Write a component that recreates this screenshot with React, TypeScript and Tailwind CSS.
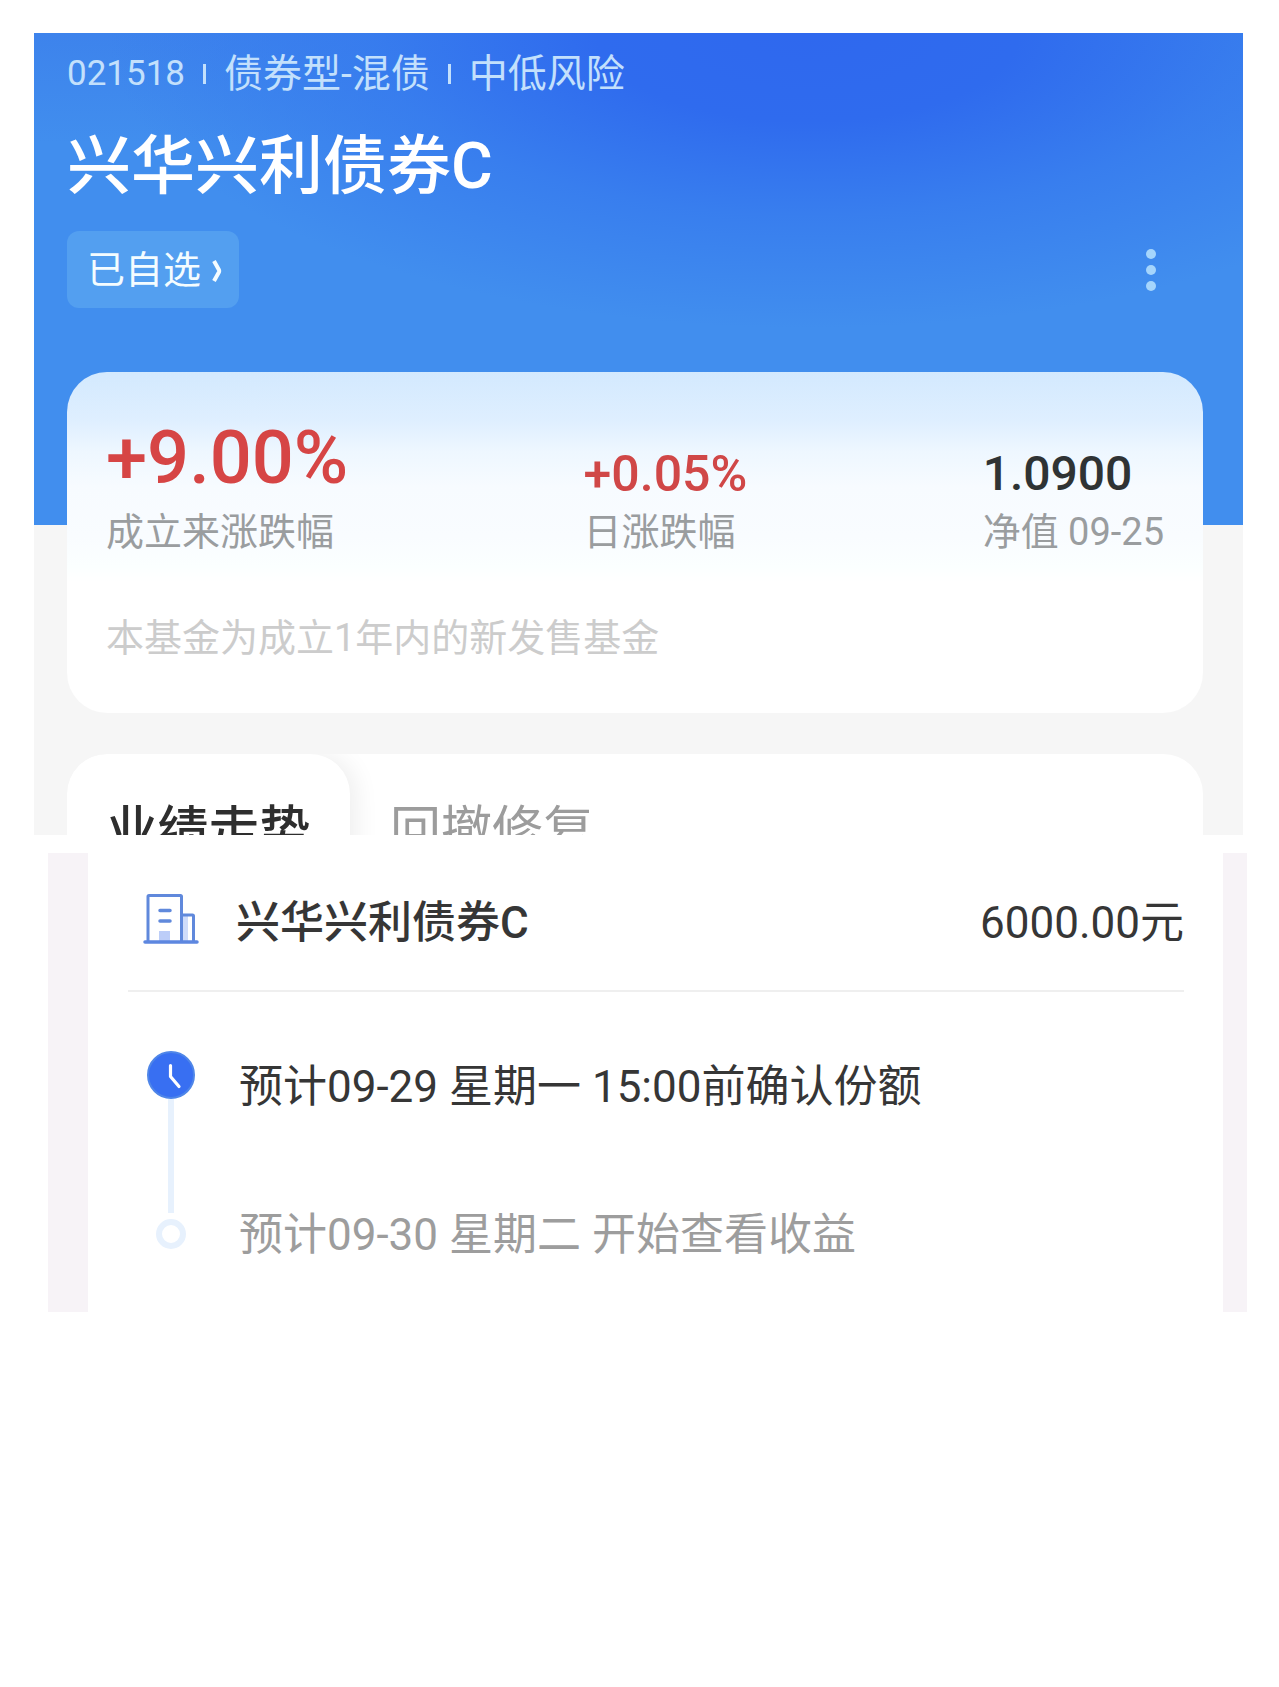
import React from "react";

const stats = [
  { value: "+9.00%", label: "成立来涨跌幅", tone: "text-[#d64545] text-[74px] leading-[80px] mb-2" },
  { value: "+0.05%", label: "日涨跌幅", tone: "text-[#d04747] text-[50px] leading-[56px] mb-1" },
  { value: "1.0900", label: "净值 09-25", tone: "text-[#2f3334] text-[48px] leading-[56px] mb-1" },
];

function BuildingIcon() {
  return (
    <svg className="mb-1" width="56" height="52" viewBox="0 0 56 52" fill="none" aria-hidden="true">
      <rect x="40" y="22" width="5" height="25" fill="#cfdcfa" />
      <rect x="16" y="37" width="11" height="11" fill="#bccdf8" />
      <path d="M5 48V2.500a1 1 0 0 1 1-1H37.500a1 1 0 0 1 1 1V48" stroke="#6089dc" strokeWidth="3" />
      <path d="M38.500 21H49.500a1 1 0 0 1 1 1V48" stroke="#6089dc" strokeWidth="3" />
      <path d="M17 16.500H27M17 27H27" stroke="#6089dc" strokeWidth="3.500" strokeLinecap="round" />
      <path d="M2 48H54" stroke="#5d87e0" strokeWidth="3.500" strokeLinecap="round" />
    </svg>
  );
}

function ClockIcon() {
  return (
    <svg className="shrink-0" width="48" height="48" viewBox="0 0 48 48" fill="none" aria-hidden="true">
      <circle cx="24" cy="24" r="23" fill="#386ff2" stroke="#4f86e8" strokeWidth="2" />
      <path d="M23.500 14.500V25.500L32 35.500" stroke="#fff" strokeWidth="3.200" strokeLinecap="round" strokeLinejoin="round" />
    </svg>
  );
}

function FundOverview() {
  return (
    <section className="mr-9 ml-[34px] h-[802px] overflow-hidden bg-[#f6f6f6]">
      <header className="h-[492px] bg-[#418eee] bg-[radial-gradient(ellipse_58%_60%_at_64%_0%,#2f68ee_0%,#2f6bee_30%,rgba(54,122,238,0.8)_62%,rgba(65,142,238,0)_100%),linear-gradient(to_bottom,#3d83ec_0px,#418eee_110px)] px-[33px] pt-[14px]">
        <div className="flex items-center gap-[18px] text-[39px] leading-[54px] text-[#c3e0fc]">
          <span className="text-[35px]">021518</span>
          <span className="h-5 w-[3px] bg-[#c3e0fc]" />
          <span>债券型-混债</span>
          <span className="h-5 w-[3px] bg-[#c3e0fc]" />
          <span>中低风险</span>
        </div>
        <h1 className="mt-[26px] text-[64px] leading-[80px] font-medium text-white">兴华兴利债券C</h1>
        <div className="mt-6 flex items-center justify-between pr-[54px]">
          <button className="flex h-[77px] items-center gap-2 rounded-xl bg-[#539ff0] pt-[2px] pr-[14px] pl-5 text-[38px] text-[#f4fcff]">
            已自选
            <svg width="16" height="24" viewBox="0 0 16 24" fill="none" aria-hidden="true">
              <path d="M5 2L10 11Q10.500 12 10 13L5 22" stroke="#f4fcff" strokeWidth="4" />
            </svg>
          </button>
          <button aria-label="更多" className="flex flex-col gap-[6px]">
            <span className="size-[10px] rounded-full bg-[#a5d5fc]" />
            <span className="size-[10px] rounded-full bg-[#a5d5fc]" />
            <span className="size-[10px] rounded-full bg-[#a5d5fc]" />
          </button>
        </div>
      </header>

      <div className="mr-10 ml-[33px]">
        <div className="-mt-[153px] h-[341px] rounded-[40px] bg-white bg-[linear-gradient(to_bottom,#d3e9fe_0px,#dfefff_50px,#eef7ff_80px,#f7fbff_115px,#f9fcff_165px,#fbffff_195px,#ffffff_210px)] px-[39px] pt-[46px]">
          <dl className="flex items-end justify-between">
            {stats.map((s) => (
              <div key={s.label} className="flex flex-col-reverse">
                <dt className="text-[38px] leading-[52px] text-[#9a9d9f]">{s.label}</dt>
                <dd className={"font-medium " + s.tone}>{s.value}</dd>
              </div>
            ))}
          </dl>
          <p className="mt-[55px] text-[38px] leading-[50px] text-[#cccccc]">本基金为成立1年内的新发售基金</p>
        </div>

        <div role="tablist" className="mt-[41px] flex h-[120px] overflow-hidden rounded-t-[40px] bg-white text-[51px] leading-[60px]">
          <button role="tab" aria-selected="true" className="flex w-[283px] shrink-0 justify-center rounded-t-[40px] bg-white pt-[47px] font-medium text-[#2e2e2e] shadow-[6px_0_24px_rgba(0,0,0,0.07)]">
            业绩走势
          </button>
          <button role="tab" aria-selected="false" className="flex pt-[47px] pl-10 text-[#9c9c9c]">回撤修复</button>
        </div>
      </div>
    </section>
  );
}

function OrderProgress() {
  return (
    <section className="mt-[18px] mr-8 ml-12 border-r-24 border-l-40 border-[#f7f3f7] pr-[39px] pl-10 text-[44px] leading-[60px] text-[#363636]">
      <div className="flex h-[139px] items-center border-b-2 border-[#efefef] pl-[15px]">
        <BuildingIcon />
        <h2 className="ml-[37px] pt-[2px] font-medium">兴华兴利债券C</h2>
        <span className="ml-auto pt-[2px]">6000.00元</span>
      </div>
      <ol className="flex h-[320px] flex-col pl-[19px]">
        <li className="flex gap-[44px] pt-[59px]">
          <div className="flex flex-col items-center">
            <ClockIcon />
            <span className="h-[114px] w-[6px] bg-[#e7f1fd]" />
          </div>
          <p className="mt-[6px]">预计09-29 星期一 15:00前确认份额</p>
        </li>
        <li className="-mt-[10px] flex items-center gap-[44px] text-[#9d9d9d]">
          <span className="flex w-12 justify-center">
            <span className="size-[30px] rounded-full border-[6px] border-[#e7f1fd]" />
          </span>
          <p className="pt-[2px]">预计09-30 星期二 开始查看收益</p>
        </li>
      </ol>
    </section>
  );
}

export default function App() {
  return (
    <main className="min-h-screen bg-white pt-[33px] font-['Roboto','Noto_Sans_CJK_SC',sans-serif]">
      <FundOverview />
      <OrderProgress />
    </main>
  );
}
